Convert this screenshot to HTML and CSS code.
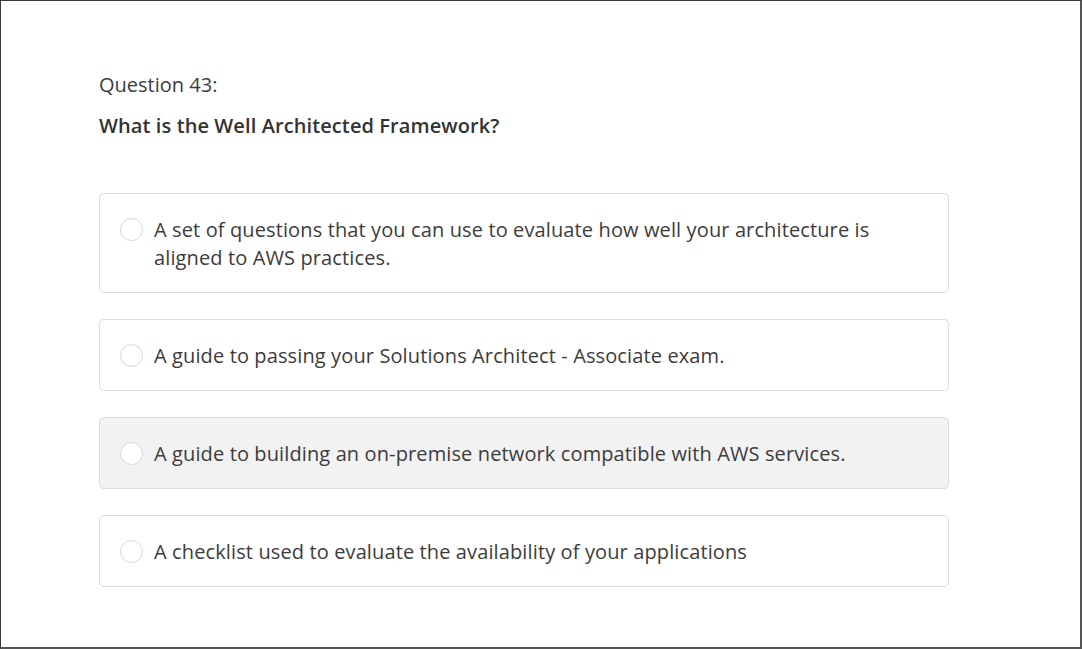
FILE: index.html
```html
<!DOCTYPE html>
<html>
<head>
<meta charset="utf-8">
<link rel="stylesheet" href="styles.css">
</head>
<body>
<div class="frame">
  <div class="quiz">
    <div class="q-label">Question 43:</div>
    <div class="q-text">What is the Well Architected Framework?</div>
    <div class="answers">
      <label class="answer">
        <span class="radio"></span>
        <span class="answer-text">A set of questions that you can use to evaluate how well your architecture is aligned to AWS practices.</span>
      </label>
      <label class="answer">
        <span class="radio"></span>
        <span class="answer-text">A guide to passing your Solutions Architect - Associate exam.</span>
      </label>
      <label class="answer hovered">
        <span class="radio"></span>
        <span class="answer-text">A guide to building an on-premise network compatible with AWS services.</span>
      </label>
      <label class="answer">
        <span class="radio"></span>
        <span class="answer-text">A checklist used to evaluate the availability of your applications</span>
      </label>
    </div>
  </div>
</div>
</body>
</html>
```

FILE: styles.css
```css
html, body {
  margin: 0;
  padding: 0;
  background: #fff;
}
body {
  font-family: "Open Sans", "Noto Sans", sans-serif;
  color: #3c3c3c;
}
.frame {
  box-sizing: border-box;
  width: 1082px;
  height: 649px;
  border-left: 1px solid #3a3a3a;
  border-top: 1px solid #3a3a3a;
  border-right: 2px solid #555;
  border-bottom: 2px solid #555;
  padding: 70px 0 0 98px;
}
.quiz {
  width: 850px;
}
.q-label {
  font-size: 20px;
  line-height: 28px;
  color: #3c3c3c;
}
.q-text {
  font-size: 20px;
  line-height: 28px;
  font-weight: 600;
  letter-spacing: 0.1px;
  margin-top: 13px;
  color: #333;
}
.answers {
  margin-top: 53px;
  display: flex;
  flex-direction: column;
  gap: 26px;
}
.answer {
  display: flex;
  align-items: flex-start;
  gap: 11px;
  border: 1px solid #dcdcdc;
  border-radius: 5px;
  padding: 22px 20px 20px 20px;
  background: #fff;
}
.answer.hovered {
  background: #f2f2f2;
}
.radio {
  flex: none;
  box-sizing: border-box;
  width: 23px;
  height: 23px;
  border-radius: 50%;
  border: 1px solid #d8d8d8;
  background: #fff;
  margin-top: 2px;
}
.answer-text {
  font-size: 20px;
  line-height: 28px;
  letter-spacing: 0.12px;
  color: #3c3c3c;
}
```
